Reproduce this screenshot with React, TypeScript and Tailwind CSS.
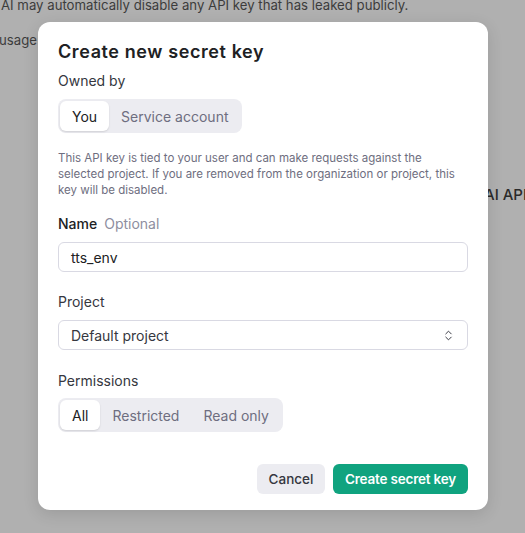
import { ChevronsUpDown } from "lucide-react";

function Segmented({ options, active }: { options: string[]; active: number }) {
	return (
		<div className="inline-flex items-center rounded-lg bg-[#ececf1] p-[2px] h-[34px]">
			{options.map((o, i) => (
				<div
					key={o}
					className={
						i === active
							? "h-[30px] flex items-center px-3 rounded-md bg-white text-[#202123] shadow-[0_1px_2px_rgba(0,0,0,0.12)]"
							: "h-[30px] flex items-center px-3 text-[#6e6e80]"
					}
				>
					{o}
				</div>
			))}
		</div>
	);
}

export default function App() {
	return (
		<div
			className="relative w-[525px] h-[533px] overflow-hidden bg-[#b0b0b0] text-[14px]"
			style={{ fontFamily: "Inter, 'Liberation Sans', sans-serif" }}
		>
			{/* page behind the overlay */}
			<div className="text-[#3c3c3c] text-[13.2px] whitespace-nowrap">
				<p className="-mt-[5px] leading-[20px] ml-[1px]">
					AI may automatically disable any API key that has leaked publicly.
				</p>
				<p className="mt-[15px] leading-[20px] -ml-[1px]">usage p</p>
			</div>
			<div className="absolute left-[484px] top-[184px] text-[15px] font-medium text-[#2a2a2a] whitespace-nowrap">
				AI API
			</div>

			{/* modal */}
			<div className="absolute left-[38px] top-[22px] w-[450px] h-[488px] rounded-[12px] bg-white px-5 pt-[19px] pb-4 shadow-[0_4px_16px_rgba(0,0,0,0.12)] flex flex-col">
				<h2 className="text-[18px] font-semibold text-[#202123] leading-[22px] tracking-[0.6px]">
					Create new secret key
				</h2>
				<div className="mt-[9px] text-[#353740] leading-[18px]">Owned by</div>
				<div className="mt-[9px]">
					<Segmented options={["You", "Service account"]} active={0} />
				</div>
				<p className="mt-[17px] text-[11.5px] leading-[16px] text-[#6e6e80]">
					This API key is tied to your user and can make requests against the
					selected project. If you are removed from the organization or project, this
					key will be disabled.
				</p>
				<div className="mt-[17px] leading-[18px] flex gap-[7px]">
					<span className="font-medium text-[#202123]">Name</span>
					<span className="text-[#8e8ea0]">Optional</span>
				</div>
				<div className="mt-[9px] h-[30px] rounded-[6px] border border-[#d9d9e3] flex items-center px-3 text-[#202123]">
					tts_env
				</div>
				<div className="mt-[21px] leading-[18px] text-[#353740]">Project</div>
				<div className="mt-[9px] h-[30px] rounded-[6px] border border-[#d9d9e3] flex items-center justify-between px-3 text-[#353740]">
					<span>Default project</span>
					<ChevronsUpDown size={13} strokeWidth={1.8} className="text-[#353740]" />
				</div>
				<div className="mt-[22px] leading-[18px] text-[#353740]">Permissions</div>
				<div className="mt-[8px]">
					<Segmented options={["All", "Restricted", "Read only"]} active={0} />
				</div>
				<div className="mt-auto flex justify-end gap-2">
					<button className="h-[30px] w-[68px] rounded-[6px] bg-[#ececf1] text-[#353740] font-medium text-[13.5px]">
						Cancel
					</button>
					<button className="h-[30px] w-[135px] rounded-[6px] bg-[#10a37f] text-white font-semibold text-[13.5px] tracking-[-0.2px]">
						Create secret key
					</button>
				</div>
			</div>
		</div>
	);
}
